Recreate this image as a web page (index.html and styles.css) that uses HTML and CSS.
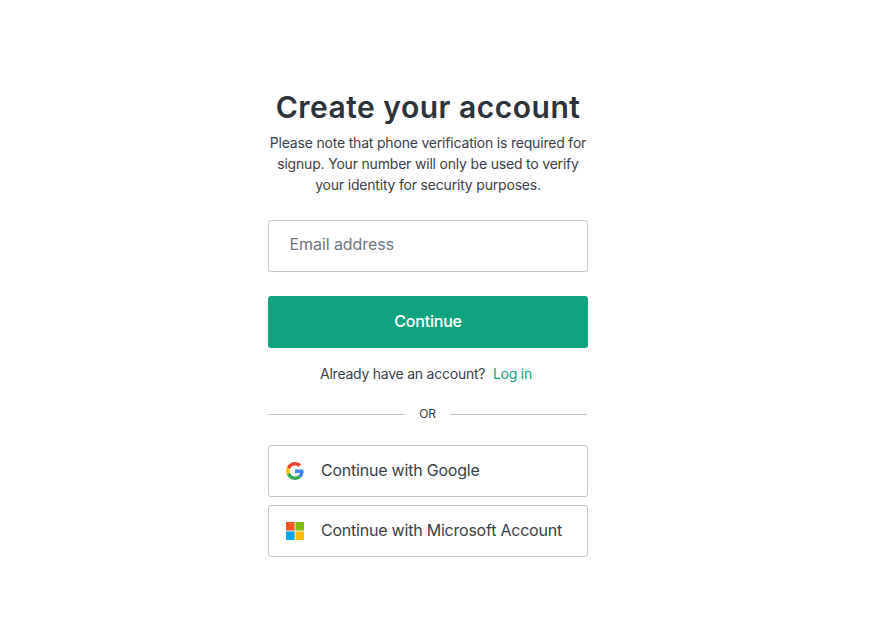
FILE: index.html
```html
<!DOCTYPE html>
<html lang="en">
<head>
<meta charset="utf-8">
<title>Create your account</title>
<link rel="stylesheet" href="styles.css">
</head>
<body>
<main class="card">
  <h1 class="title">Create your account</h1>
  <p class="note">Please note that phone verification is required for signup. Your number will only be used to verify your identity for security purposes.</p>
  <form class="form">
    <input class="email" type="text" placeholder="Email address">
    <button class="continue" type="button">Continue</button>
  </form>
  <p class="login">Already have an account? <a class="link" href="#">Log in</a></p>
  <div class="divider"><span class="or">OR</span></div>
  <div class="social">
    <button class="provider" type="button">
      <svg class="icon" viewBox="0 0 48 48" aria-hidden="true">
        <path fill="#EA4335" d="M24 9.5c3.54 0 6.71 1.22 9.21 3.6l6.85-6.85C35.9 2.38 30.47 0 24 0 14.62 0 6.51 5.38 2.56 13.22l7.98 6.19C12.43 13.72 17.74 9.5 24 9.5z"/>
        <path fill="#4285F4" d="M46.98 24.55c0-1.57-.15-3.09-.38-4.55H24v9.02h12.94c-.58 2.96-2.26 5.48-4.78 7.18l7.73 6c4.51-4.18 7.09-10.36 7.09-17.65z"/>
        <path fill="#FBBC05" d="M10.53 28.59c-.48-1.45-.76-2.99-.76-4.59s.27-3.14.76-4.59l-7.98-6.19C.92 16.46 0 20.12 0 24c0 3.88.92 7.54 2.56 10.78l7.97-6.19z"/>
        <path fill="#34A853" d="M24 48c6.48 0 11.93-2.13 15.89-5.81l-7.73-6c-2.15 1.45-4.92 2.3-8.16 2.3-6.26 0-11.57-4.22-13.47-9.91l-7.98 6.19C6.51 42.62 14.62 48 24 48z"/>
      </svg>
      <span>Continue with Google</span>
    </button>
    <button class="provider" type="button">
      <svg class="icon" viewBox="0 0 21 21" aria-hidden="true">
        <rect x="0" y="0" width="10" height="10" fill="#F35325"/>
        <rect x="11" y="0" width="10" height="10" fill="#81BC06"/>
        <rect x="0" y="11" width="10" height="10" fill="#05A6F0"/>
        <rect x="11" y="11" width="10" height="10" fill="#FFBA08"/>
      </svg>
      <span>Continue with Microsoft Account</span>
    </button>
  </div>
</main>
</body>
</html>
```
FILE: styles.css
```css
* { box-sizing: border-box; }
html, body { margin: 0; height: 100%; background: #fff; }
body {
  display: flex;
  justify-content: center;
  align-items: flex-start;
  padding: 88px 34px 0 0;
  font-family: Inter, "Noto Sans", "Liberation Sans", sans-serif;
  color: #2d333a;
  overflow: hidden;
}
.card { width: 320px; display: flex; flex-direction: column; }
.title {
  margin: 0;
  font-size: 30px;
  line-height: 38px;
  font-weight: 600;
  letter-spacing: .5px;
  text-align: center;
  color: #2d333a;
  white-space: nowrap;
}
.note {
  margin: 6px 0 0;
  font-size: 14px;
  line-height: 21px;
  letter-spacing: -.19px;
  text-align: center;
  color: #3b4149;
}
.form { margin-top: 25px; display: flex; flex-direction: column; gap: 24px; }
.email {
  height: 52px;
  width: 100%;
  padding: 0 21px 5px 20.5px;
  border: 1px solid #c2c8d0;
  border-radius: 3px;
  font: 400 16px Inter, "Noto Sans", sans-serif;
  letter-spacing: -.07px;
  color: #2d333a;
  outline: none;
  background: #fff;
}
.email::placeholder { color: #6f7780; opacity: 1; }
.continue {
  height: 52px;
  padding: 0 0 2px;
  border: 0;
  border-radius: 3px;
  background: #10a37f;
  color: #fff;
  font: 500 16px Inter, "Noto Sans", sans-serif;
  letter-spacing: -.2px;
  cursor: pointer;
}
.login {
  margin: 16px 0 0;
  padding-right: 4px;
  font-size: 14px;
  line-height: 20px;
  letter-spacing: -.24px;
  text-align: center;
  color: #3b4149;
}
.link { margin-left: 4px; color: #10a37f; text-decoration: none; }
.divider {
  margin-top: 20px;
  padding-right: 1px;
  display: flex;
  align-items: center;
  gap: 14px;
  font-size: 12px;
  line-height: 20px;
  letter-spacing: -.1px;
  color: #3b4149;
}
.divider::before, .divider::after {
  content: "";
  flex: 1;
  height: 1px;
  background: #c2c8d0;
}
.social { margin-top: 21px; display: flex; flex-direction: column; gap: 8px; }
.provider {
  height: 52px;
  display: flex;
  align-items: center;
  gap: 17px;
  padding: 0 0 2px 17px;
  background: #fff;
  border: 1px solid #c2c8d0;
  border-radius: 3px;
  font: 400 16px Inter, "Noto Sans", sans-serif;
  letter-spacing: -.22px;
  color: #3b4149;
  text-align: left;
  cursor: pointer;
}
.icon { width: 18px; height: 18px; flex: none; position: relative; top: 1px; }
```
